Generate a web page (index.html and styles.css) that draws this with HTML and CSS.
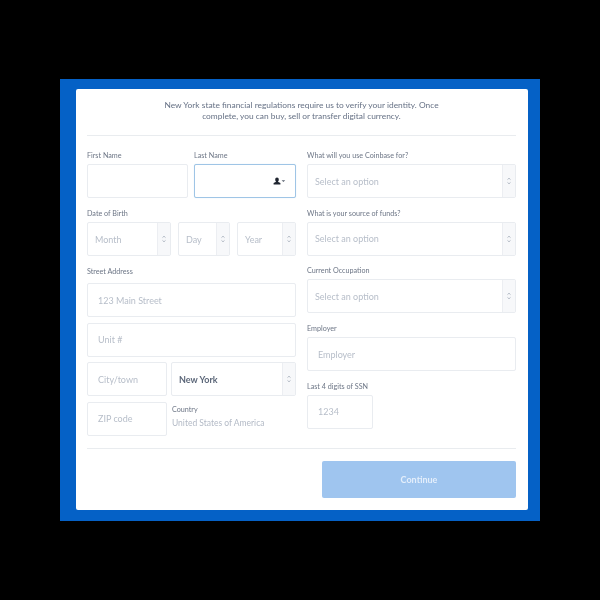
FILE: index.html
```html
<!DOCTYPE html>
<html lang="en">
<head>
    <meta charset="UTF-8">
    <meta name="viewport" content="width=device-width, initial-scale=1.0">
    <title>Verify your identity</title>
    <link rel="stylesheet" href="styles.css">
</head>
<body>

    <div class="Frame">
        <main class="Card">
            <p class="Intro">
                New York state financial regulations require us to verify your identity. Once<br>
                complete, you can buy, sell or transfer digital currency.
            </p>

            <div class="Columns">
                <div class="Col">
                    <div class="Row">
                        <div class="Group First">
                            <div class="Label">First Name</div>
                            <div class="Field"></div>
                        </div>
                        <div class="Group Grow">
                            <div class="Label">Last Name</div>
                            <div class="Field Focus">
                                <svg class="Autofill" viewBox="0 0 13 8" width="13" height="8">
                                    <path d="M4 0.6c1.1 0 1.8 0.9 1.8 2.1 0 0.9-0.4 1.6-0.9 2l2.5 1.2v1.5H0.6V5.900l2.500-1.200c-0.500-0.400-0.900-1.100-0.900-2C2.200 1.500 2.900 0.600 4 0.600z" fill="#1f2530"/>
                                    <path d="M8.600 3.200h3.600l-1.800 1.900z" fill="#5b6472"/>
                                </svg>
                            </div>
                        </div>
                    </div>

                    <div class="Group">
                        <div class="Label">Date of Birth</div>
                        <div class="Row Dob">
                            <div class="Field Select Month"><span class="Hint">Month</span><div class="Stepper"><svg viewBox="0 0 6 12" width="6" height="12"><path d="M1.500 4.600l1.500-1.400 1.500 1.400M1.500 7.400l1.500 1.400 1.500-1.400" fill="none" stroke="#aab2be" stroke-width="0.9"/></svg></div></div>
                            <div class="Field Select Day"><span class="Hint">Day</span><div class="Stepper"><svg viewBox="0 0 6 12" width="6" height="12"><path d="M1.500 4.600l1.500-1.400 1.500 1.400M1.500 7.400l1.500 1.400 1.500-1.400" fill="none" stroke="#aab2be" stroke-width="0.9"/></svg></div></div>
                            <div class="Field Select Year"><span class="Hint">Year</span><div class="Stepper"><svg viewBox="0 0 6 12" width="6" height="12"><path d="M1.500 4.600l1.500-1.400 1.500 1.400M1.500 7.400l1.500 1.400 1.500-1.400" fill="none" stroke="#aab2be" stroke-width="0.9"/></svg></div></div>
                        </div>
                    </div>

                    <div class="Group">
                        <div class="Label LabelWide">Street Address</div>
                        <div class="Stack">
                            <div class="Field"><span class="Hint">123 Main Street</span></div>
                            <div class="Field"><span class="Hint">Unit #</span></div>
                            <div class="Row Address">
                                <div class="Field City"><span class="Hint">City/town</span></div>
                                <div class="Field Select Grow"><span class="Value">New York</span><div class="Stepper"><svg viewBox="0 0 6 12" width="6" height="12"><path d="M1.500 4.600l1.500-1.400 1.500 1.400M1.500 7.400l1.500 1.400 1.500-1.400" fill="none" stroke="#aab2be" stroke-width="0.9"/></svg></div></div>
                            </div>
                            <div class="Row Address">
                                <div class="Field City"><span class="Hint">ZIP code</span></div>
                                <div class="Country">
                                    <div class="Label">Country</div>
                                    <div class="CountryName">United States of America</div>
                                </div>
                            </div>
                        </div>
                    </div>
                </div>

                <div class="Col ColRight">
                    <div class="Group">
                        <div class="Label">What will you use Coinbase for?</div>
                        <div class="Field Select"><span class="Hint">Select an option</span><div class="Stepper"><svg viewBox="0 0 6 12" width="6" height="12"><path d="M1.500 4.600l1.500-1.400 1.500 1.400M1.500 7.400l1.500 1.400 1.500-1.400" fill="none" stroke="#aab2be" stroke-width="0.9"/></svg></div></div>
                    </div>
                    <div class="Group">
                        <div class="Label">What is your source of funds?</div>
                        <div class="Field Select"><span class="Hint">Select an option</span><div class="Stepper"><svg viewBox="0 0 6 12" width="6" height="12"><path d="M1.500 4.600l1.500-1.400 1.500 1.400M1.500 7.400l1.500 1.400 1.500-1.400" fill="none" stroke="#aab2be" stroke-width="0.9"/></svg></div></div>
                    </div>
                    <div class="Group">
                        <div class="Label">Current Occupation</div>
                        <div class="Field Select"><span class="Hint">Select an option</span><div class="Stepper"><svg viewBox="0 0 6 12" width="6" height="12"><path d="M1.500 4.600l1.500-1.400 1.500 1.400M1.500 7.400l1.500 1.400 1.500-1.400" fill="none" stroke="#aab2be" stroke-width="0.9"/></svg></div></div>
                    </div>
                    <div class="Group">
                        <div class="Label">Employer</div>
                        <div class="Field"><span class="Hint">Employer</span></div>
                    </div>
                    <div class="Group">
                        <div class="Label">Last 4 digits of SSN</div>
                        <div class="Field Ssn"><span class="Hint">1234</span></div>
                    </div>
                </div>
            </div>

            <div class="Footer">
                <button class="Button">Continue</button>
            </div>
        </main>
    </div>

</body>
</html>
```

FILE: styles.css
```css
body {
    margin: 0;
    height: 600px;
    background-color: #000;
    font-family: 'Lato', sans-serif;
    overflow: hidden;
}

.Frame {
    box-sizing: border-box;
    width: 480px;
    height: 442px;
    margin: 79px 0 0 60px;
    padding: 10px 12px 11px 16px;
    background-color: #0561c6;
    filter: blur(0.3px);
}

.Card {
    box-sizing: border-box;
    height: 421px;
    padding: 11px 12px 12px 11px;
    background-color: #fff;
    border-radius: 2px;
}

.Intro {
    margin: 0;
    padding-bottom: 13px;
    border-bottom: 1px solid #e9ecef;
    color: #667185;
    font-size: 8.4px;
    line-height: 11px;
    text-align: center;
}

.Columns {
    display: flex;
    gap: 11px;
    height: 313px;
    padding-top: 15px;
    box-sizing: border-box;
    border-bottom: 1px solid #e9ecef;
}

.Col {
    display: flex;
    flex-direction: column;
    gap: 11px;
    width: 209px;
}

.ColRight {
    gap: 10.7px;
}

.Row {
    display: flex;
    gap: 6px;
}

.First {
    flex: none;
    width: 101px;
}

.Grow {
    flex: 1;
    min-width: 0;
}

.Label {
    height: 10px;
    margin-bottom: 3px;
    color: #6d7686;
    font-size: 7.2px;
    line-height: 10px;
}

.LabelWide {
    margin-bottom: 6px;
}

.Field {
    box-sizing: border-box;
    display: flex;
    align-items: center;
    justify-content: space-between;
    height: 34px;
    padding-left: 10px;
    background-color: #fff;
    border: 1px solid #e9ecf0;
    border-radius: 2px;
    font-size: 9px;
}

.Focus {
    justify-content: flex-end;
    padding-right: 9px;
    border-color: #9fc5e6;
    box-shadow: 0 0 1px #c9dff2;
}

.Autofill {
    display: block;
}

.Hint {
    color: #b7bec9;
}

.Value {
    color: #5c6779;
    font-weight: 700;
}

.Select {
    padding-left: 7px;
    padding-right: 0;
}

.Stepper {
    display: flex;
    align-items: center;
    justify-content: center;
    flex: none;
    width: 12px;
    height: 100%;
    background-color: #f7f8fa;
    border-left: 1px solid #eceef2;
}

.Month {
    width: 84px;
}

.Day {
    width: 52px;
    margin-left: 1px;
}

.Year {
    width: 59px;
    margin-left: 1px;
}

.Stack {
    display: flex;
    flex-direction: column;
    gap: 5.5px;
}

.Address {
    gap: 4px;
}

.City {
    flex: none;
    width: 80px;
}

.Country {
    padding: 3px 0 0 1px;
}

.Country .Label {
    margin-bottom: 3px;
}

.CountryName {
    color: #b3bac6;
    font-size: 8.5px;
    line-height: 11px;
}

.Ssn {
    width: 66px;
}

.Footer {
    display: flex;
    justify-content: flex-end;
    padding-top: 12px;
}

.Button {
    width: 194px;
    height: 37px;
    padding: 0;
    background-color: #9fc5ef;
    border: 0;
    border-radius: 2px;
    color: #e3eefb;
    font-family: inherit;
    font-size: 9px;
    font-weight: 700;
}
```
